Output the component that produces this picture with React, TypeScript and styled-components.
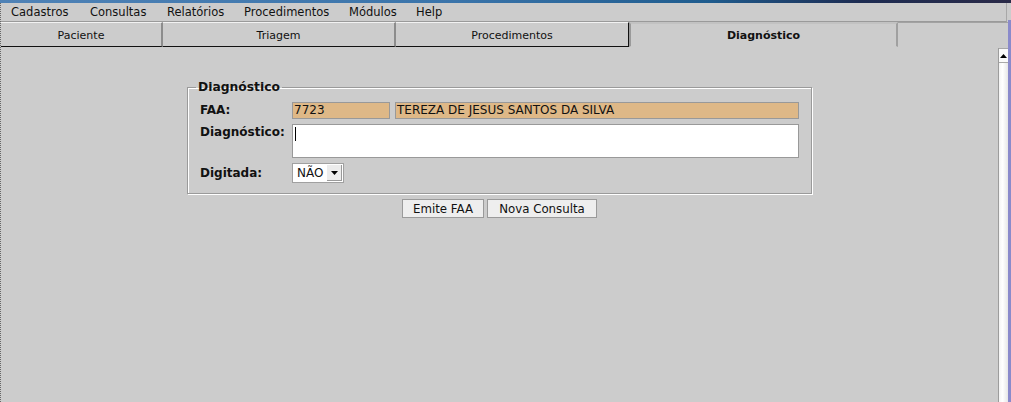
import React from "react";
import styled, { createGlobalStyle } from "styled-components";

const Global = createGlobalStyle`
  html, body { margin: 0; padding: 0; background: #cccccc; }
  body { font-family: "DejaVu Sans", "Liberation Sans", sans-serif; overflow: hidden; }
  * { box-sizing: border-box; }
`;

const Screen = styled.div`
  width: 1011px;
  height: 402px;
  display: flex;
  flex-direction: column;
  background: #cccccc;
  overflow: hidden;
`;

const TitleStrip = styled.div`
  height: 3px;
  flex: none;
  background: linear-gradient(90deg, #4f82b6 0%, #3a74aa 45%, #1f5c8e 70%, #1d2c52 85%, #2a2a48 100%);
`;

const Frame = styled.div`
  flex: 1;
  display: flex;
  min-height: 0;
`;

const Main = styled.div`
  flex: 1;
  display: flex;
  flex-direction: column;
  border-left: 1px dotted #666;
  min-width: 0;
`;

const BlueEdge = styled.div`
  width: 3px;
  flex: none;
  margin-top: 17px;
  background: #8a8acb;
`;

const MenuBar = styled.div`
  height: 19px;
  flex: none;
  display: flex;
  align-items: center;
  padding-left: 10px;
  border-bottom: 1px solid #9a9a9a;
  border-right: 1px solid #a8a8a8;
  margin-right: 1px;
`;

const MenuItem = styled.span<{ $w: number }>`
  width: ${(p) => p.$w}px;
  font-size: 11.5px;
  color: #111;
  white-space: nowrap;
`;

const TabBar = styled.div`
  height: 25px;
  flex: none;
  display: flex;
`;

type TabKind = "normal" | "beforeActive" | "active" | "blank";

const Tab = styled.div<{ $w?: number; $kind?: TabKind }>`
  ${(p) => (p.$w ? `width: ${p.$w}px; flex: none;` : "flex: 1;")}
  display: flex;
  align-items: center;
  justify-content: center;
  font-size: 11px;
  font-weight: ${(p) => (p.$kind === "active" ? 700 : 400)};
  color: #111;
  padding-top: 1px;
  border-top: ${(p) =>
    p.$kind === "active" ? "2px solid #c2c2c2" : p.$kind === "blank" ? "1px solid #a2a2a2" : "1px solid #f2f2f2"};
  border-bottom: ${(p) =>
    p.$kind === "active" || p.$kind === "blank" ? "1px solid transparent" : "1px solid #111"};
  border-right: ${(p) =>
    p.$kind === "blank"
      ? "none"
      : p.$kind === "beforeActive"
      ? "1px solid #111"
      : p.$kind === "active"
      ? "2px solid #a0a0a0"
      : "2px solid #8c8c8c"};
  border-left: ${(p) => (p.$kind === "active" ? "2px solid #9a9a9a" : "none")};
`;

const Body = styled.div`
  flex: 1;
  display: flex;
  min-height: 0;
`;

const Content = styled.div`
  flex: 1;
  display: flex;
  flex-direction: column;
  align-items: center;
  padding-top: 33px;
`;

const Group = styled.fieldset`
  width: 625px;
  margin: 0;
  padding: 0 0 10px 8px;
  border: 1px solid #9a9a9a;
  box-shadow: 1px 1px 0 #ffffff, inset 1px 1px 0 #ffffff;
`;

const Legend = styled.legend`
  padding: 0 2px;
  font-size: 12.3px;
  font-weight: 700;
  color: #111;
  line-height: 14px;
`;

const FormGrid = styled.div`
  display: grid;
  grid-template-columns: 92px 1fr;
  row-gap: 5px;
  padding: 8px 12px 0 4px;
`;

const Label = styled.div<{ $top?: boolean }>`
  font-size: 12px;
  font-weight: 700;
  color: #111;
  display: flex;
  align-items: ${(p) => (p.$top ? "flex-start" : "center")};
  padding-top: ${(p) => (p.$top ? "1px" : "0")};
  line-height: 15px;
`;

const FieldRow = styled.div`
  display: flex;
  gap: 5px;
`;

const TextField = styled.div<{ $w?: number }>`
  ${(p) => (p.$w ? `width: ${p.$w}px; flex: none;` : "flex: 1;")}
  height: 17px;
  background: #deb887;
  border: 1px solid #999;
  font-size: 12px;
  line-height: 15px;
  padding-left: 1px;
  color: #111;
  white-space: nowrap;
  overflow: hidden;
`;

const TextArea = styled.div`
  height: 34px;
  background: #ffffff;
  border: 1px solid #999;
  padding: 2px 0 0 2px;
`;

const Caret = styled.span`
  display: block;
  width: 1px;
  height: 14px;
  background: #000;
`;

const Combo = styled.div`
  width: 52px;
  height: 20px;
  display: flex;
  background: #fff;
  border: 1px solid #a0a0a0;
`;

const ComboText = styled.span`
  flex: 1;
  font-size: 12px;
  line-height: 18px;
  padding-left: 4px;
  color: #111;
`;

const ComboButton = styled.span`
  width: 15px;
  margin: 1px 1px 1px 0;
  background: #ececec;
  border-right: 1px solid #9a9a9a;
  border-bottom: 1px solid #9a9a9a;
  display: flex;
  align-items: center;
  justify-content: center;
`;

const ButtonRow = styled.div`
  display: flex;
  gap: 3px;
  margin-top: 5px;
`;

const Button = styled.button<{ $w: number }>`
  width: ${(p) => p.$w}px;
  height: 19px;
  padding: 0;
  background: #eeeeee;
  border: 1px solid #9a9a9a;
  border-radius: 0;
  font-family: "DejaVu Sans", "Liberation Sans", sans-serif;
  font-size: 11.8px;
  color: #111;
  line-height: 16px;
`;

const Scrollbar = styled.div`
  width: 10px;
  flex: none;
  margin-top: 1px;
  display: flex;
  flex-direction: column;
  background: linear-gradient(90deg, #f4f4f4 0%, #ffffff 40%, #e6e6e6 100%);
  border-left: 1px solid #9c9c9c;
`;

const ScrollUp = styled.div`
  height: 15px;
  flex: none;
  background: #fafafa;
  border-top: 1px solid #a8a8a8;
  border-bottom: 1px solid #a8a8a8;
  display: flex;
  align-items: center;
  justify-content: center;
`;

export default function App() {
  return (
    <>
      <Global />
      <Screen>
        <TitleStrip />
        <Frame>
          <Main>
            <MenuBar>
              <MenuItem $w={79}>Cadastros</MenuItem>
              <MenuItem $w={77}>Consultas</MenuItem>
              <MenuItem $w={77}>Relatórios</MenuItem>
              <MenuItem $w={105}>Procedimentos</MenuItem>
              <MenuItem $w={67}>Módulos</MenuItem>
              <MenuItem $w={40}>Help</MenuItem>
            </MenuBar>
            <TabBar>
              <Tab $w={162}>Paciente</Tab>
              <Tab $w={233}>Triagem</Tab>
              <Tab $w={233} $kind="beforeActive">
                Procedimentos
              </Tab>
              <Tab $w={269} $kind="active">
                Diagnóstico
              </Tab>
              <Tab $kind="blank" />
            </TabBar>
            <Body>
              <Content>
                <Group>
                  <Legend>Diagnóstico</Legend>
                  <FormGrid>
                    <Label>FAA:</Label>
                    <FieldRow>
                      <TextField $w={98}>7723</TextField>
                      <TextField $w={404}>TEREZA DE JESUS SANTOS DA SILVA</TextField>
                    </FieldRow>
                    <Label $top>Diagnóstico:</Label>
                    <TextArea>
                      <Caret />
                    </TextArea>
                    <Label>Digitada:</Label>
                    <div>
                      <Combo>
                        <ComboText>NÃO</ComboText>
                        <ComboButton>
                          <svg width="7" height="4" viewBox="0 0 7 4">
                            <path d="M0 0h7L3.5 4z" fill="#000" />
                          </svg>
                        </ComboButton>
                      </Combo>
                    </div>
                  </FormGrid>
                </Group>
                <ButtonRow>
                  <Button $w={82}>Emite FAA</Button>
                  <Button $w={110}>Nova Consulta</Button>
                </ButtonRow>
              </Content>
              <Scrollbar>
                <ScrollUp>
                  <svg width="7" height="4" viewBox="0 0 7 4">
                    <path d="M0 4h7L3.5 0z" fill="#000" />
                  </svg>
                </ScrollUp>
              </Scrollbar>
            </Body>
          </Main>
          <BlueEdge />
        </Frame>
      </Screen>
    </>
  );
}
